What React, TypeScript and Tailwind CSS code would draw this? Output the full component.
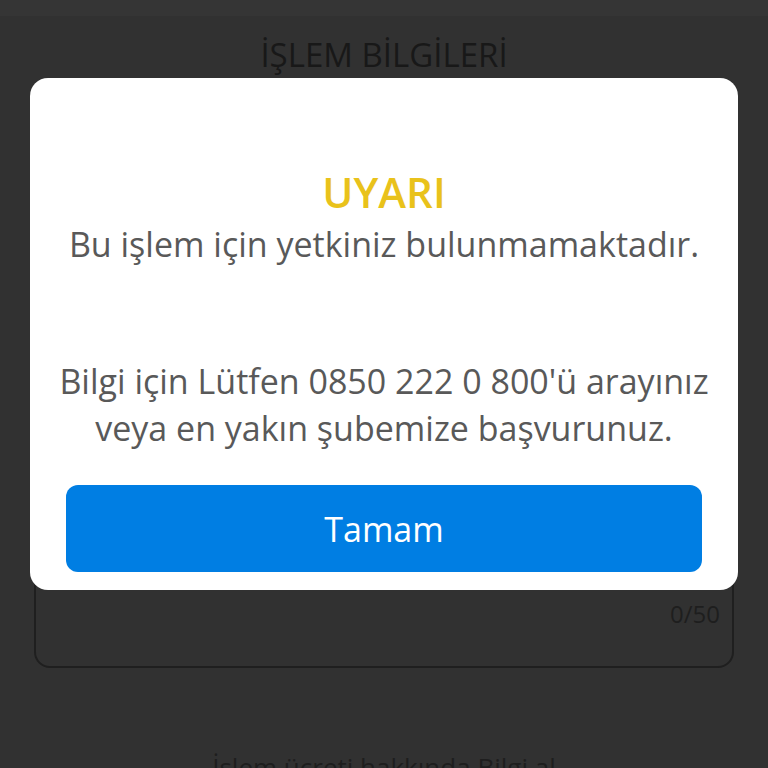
import React from "react";

export default function App() {
  return (
    <div
      className="relative w-[768px] h-[768px] overflow-hidden bg-[#313131] flex flex-col"
      style={{ fontFamily: '"Open Sans", "Noto Sans", sans-serif' }}
    >
      <div className="h-[16px] bg-[#353535] shrink-0" />
      <div className="mt-[19px] h-[40px] text-center text-[33px] leading-[40px] text-[#181818] shrink-0">
        İŞLEM BİLGİLERİ
      </div>
      <div className="mt-[395px] mx-[34px] h-[198px] shrink-0 rounded-[16px] border-2 border-[#1f1f1f] flex flex-col justify-end">
        <div className="pb-[37px] pr-[12px] text-right text-[24px] leading-[30px] text-[#1e1e1e]">0/50</div>
      </div>
      <div className="mt-[82px] text-center text-[26px] leading-[34px] text-[#1e1e1e] shrink-0">
        İşlem ücreti hakkında Bilgi al
      </div>

      <div className="absolute left-[30px] right-[30px] top-[78px] rounded-[18px] bg-white flex flex-col items-center pt-[89px] pb-[18px] px-[36px]">
        <div className="text-[42px] leading-[50px] font-semibold text-[#e9c21b]">UYARI</div>
        <div className="mt-[4px] text-[34px] leading-[47px] text-[#595959] text-center whitespace-nowrap">
          Bu işlem için yetkiniz bulunmamaktadır.
        </div>
        <div className="mt-[90px] text-[34px] leading-[47px] text-[#595959] text-center whitespace-nowrap">
          Bilgi için Lütfen 0850 222 0 800'ü arayınız
          <br />
          veya en yakın şubemize başvurunuz.
        </div>
        <button className="mt-[33px] w-full h-[87px] rounded-[12px] bg-[#007ee3] text-white text-[34px] leading-[40px]">
          Tamam
        </button>
      </div>
    </div>
  );
}
